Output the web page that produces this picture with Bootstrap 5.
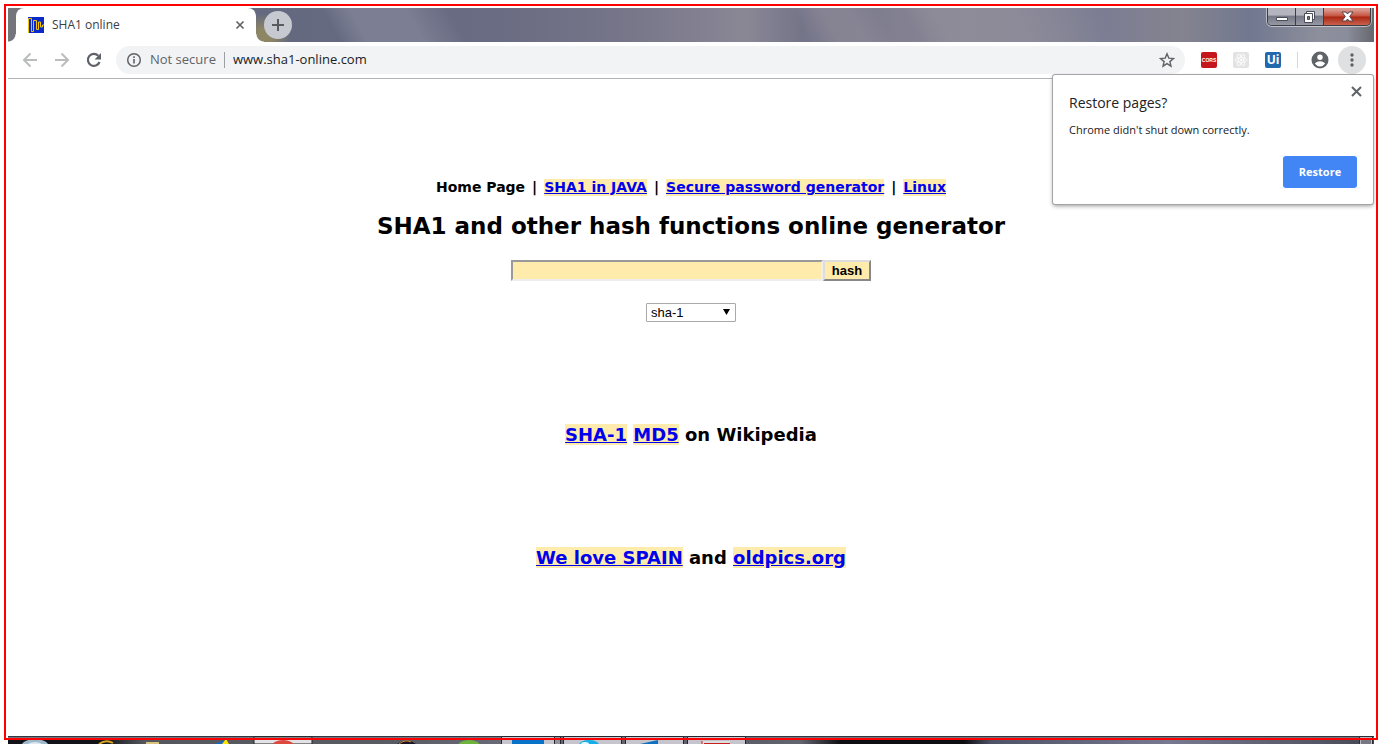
<!DOCTYPE html>
<html lang="en">
<head>
<meta charset="utf-8">
<meta name="viewport" content="width=device-width, initial-scale=1">
<title>SHA1 online</title>
<link href="https://cdn.jsdelivr.net/npm/bootstrap@5.3.0/dist/css/bootstrap.min.css" rel="stylesheet">
<style>
body { background: #fff; color: #000; font-family: "Open Sans", sans-serif; font-size: 12px; }
svg { display: block; flex: none; }
button { padding: 0; }
.screen { padding: 8px 8px 0; }
.outline-frame { position: absolute; inset: 4px; border: 2px solid #f00; pointer-events: none; z-index: 20; }

.title-strip {
  height: 34px; padding-left: 8px;
  background:
    radial-gradient(ellipse 26px 22px at 256px 28px, #8d8664 0 30%, transparent),
    linear-gradient(60deg, transparent 24%, #7c7f93 26% 30%, transparent 33% 58%, #8c8896aa 60% 62%, transparent 64% 66%, #918e9baa 68% 74%, transparent 80%),
    linear-gradient(90deg, #74747a 0, #646980 20%, #6a6c83 36%, #767589 45%, #8a8795 54%, #75758a 58%, #8a8795 70%, #7b7d93 80%, #84838f 86%, #71788f 91%, #8d8f9c 96%, #8a8d9b 98%, #66676d 100%);
}
.browser-tab { width: 240px; height: 34px; padding: 0 11px 0 12px; border-radius: 8px 8px 0 0; background: #fff; position: relative; color: #3c4043; }
.browser-tab::before, .browser-tab::after { content: ""; position: absolute; bottom: 0; width: 8px; height: 8px; }
.browser-tab::before { left: -8px; background: radial-gradient(circle at 0 0, transparent 7px, #fff 8px); }
.browser-tab::after { right: -8px; background: radial-gradient(circle at 100% 0, transparent 7px, #fff 8px); }
.new-tab { width: 28px; height: 28px; border-radius: 50%; background: #c7c9d1; margin: 3px 0 0 8px; }

.win-controls { border: 1px solid #3b3d46; border-top: 0; border-radius: 0 0 5px 5px; overflow: hidden; height: 18px; box-shadow: 0 0 0 1px #ffffff80; margin-right: 3px; }
.win-controls button { height: 17px; border-right: 1px solid #3b3d46 !important; background: linear-gradient(#b4b5bf 0 40%, #777987 50%, #9698a3); }
.win-controls .win-small { width: 28px; }
.win-controls .win-close { width: 46px; border-right: 0 !important; background: linear-gradient(#d9998e 0 10%, #c6513e 48%, #a92611 52%, #c8614d); }

.toolbar { height: 37px; border-bottom: 1px solid #b3b3b5; padding: 0 8px 0 14px; color: #5f6368; }
.nav-icons { gap: 16px; }
.omnibox { height: 28px; border-radius: 14px; background: #f1f3f4; margin: 0 16px 0 14px; padding: 0 10px; font-size: 13px; }
.omnibox .divider { width: 1px; height: 16px; background: #9aa0a6; }
.omnibox input { border: 0; background: none; outline: 0; color: #202124; padding: 0; }
.ext-icons { gap: 16px; }
.ext { width: 16px; height: 16px; border-radius: 2px; line-height: 16px; color: #fff; }
.ext-cors { background: #c4161c; font: bold 5px/16px "Liberation Sans", sans-serif; }
.ext-ui { background: #2268ad; font: bold 12px/16px "Open Sans", sans-serif; }
.bar-sep { width: 1px; height: 16px; background: #d5d7da; margin-left: 16px; }
.profile { margin-left: 12px; }
.menu-btn { width: 28px; height: 28px; border-radius: 50%; background: #dfe0e1; margin-left: 8px; }

.restore-bubble { position: absolute; top: 75px; right: 9px; width: 320px; padding: 18px 16px 16px; background: #fff; border-radius: 2px; box-shadow: 0 0 0 1px #a5a5a7, 0 2px 4px #0006; color: #202124; z-index: 10; }
.restore-bubble h2 { font-size: 14px; line-height: 20px; font-weight: 400; margin: 0 0 8px; }
.restore-bubble p { font-size: 11px; line-height: 18px; margin: 0 0 17px; }
.restore-btn { width: 74px; height: 32px; border-radius: 3px; background: #4285f4; color: #fff; font-size: 11px; font-weight: 700; }
.bubble-x { position: absolute; top: 11px; right: 11px; }

.page { padding-top: 99px; font-family: "DejaVu Sans", sans-serif; font-weight: 700; text-align: center; }
.page a { background: #ffebac; color: #00e; }
.top-links { font-size: 14px; line-height: 17px; margin: 1px 0 14px; gap: 7px; }
.page h1 { font-size: 23px; line-height: 32px; font-weight: 700; margin: 0 0 18px; }
.page h3 { font-size: 18px; line-height: 22px; font-weight: 700; margin: 0 0 101px; }
.hash-input { width: 312px; height: 21px; border: 2px solid; border-color: #999 #eee #eee #999; background: #ffebac; border-radius: 0; padding: 1px; outline: 0; }
.hash-btn { width: 48px; height: 21px; border: 2px solid; border-color: #ddd #888 #888 #ddd; background: #ffebac; font: bold 13px/15px "Liberation Sans", sans-serif; color: #000; }
.algo { width: 90px; height: 19px; margin: 22px 0 102px; border: 1px solid #a9a9a9; border-radius: 1px; padding: 0 4px; color: #000; background: #fff; font: 13px/16px "Liberation Sans", sans-serif; appearance: none; }
.algo-arrow { position: absolute; right: 6px; top: 28px; pointer-events: none; }

.taskbar { height: 8px; background: linear-gradient(#333744 0 1px, #b3b5bd 2px, transparent 3px), linear-gradient(90deg, #111318 0 7%, #55575f 10%, #5a5c64 29%, #686a78 36%, #5a5e69 54%, #62646f 58%, #0d0e12 61% 70%, #4e5467 72%, #777990 85%, #464954); overflow: hidden; }
</style>
</head>
<body>
<div class="screen d-flex flex-column vh-100 position-relative overflow-hidden">
  <div class="outline-frame"></div>

  <header>
    <div class="title-strip d-flex align-items-start">
      <div class="browser-tab d-flex align-items-center">
        <svg width="16" height="16" viewBox="0 0 16 16"><path fill="#0b29c8" d="M0 0h16v16H0z"/><path d="M.5 16V1.500h3v13h2v-11h3v9h2V5h2v5h2V8h2" fill="none" stroke="#f2c40c"/></svg>
        <span class="flex-grow-1 ms-2">SHA1 online</span>
        <button class="btn border-0 rounded-0 p-0" aria-label="Close tab"><svg width="10" height="10" viewBox="0 0 10 10"><path d="M1.500 1.500l7 7m0-7l-7 7" stroke="#5f6368" stroke-width="1.700"/></svg></button>
      </div>
      <button class="new-tab border-0 d-flex align-items-center justify-content-center" aria-label="New tab"><svg width="14" height="14" viewBox="0 0 14 14"><path d="M7 1v12M1 7h12" stroke="#5a5b5e" stroke-width="2"/></svg></button>
      <div class="win-controls d-flex ms-auto">
        <button class="win-small border-0 d-flex align-items-center justify-content-center" aria-label="Minimize"><svg width="14" height="10" viewBox="0 0 14 10"><path d="M1.500 5.500h11v3h-11z" fill="#fff" stroke="#4a4c57"/></svg></button>
        <button class="win-small border-0 d-flex align-items-center justify-content-center" aria-label="Restore window"><svg width="13" height="12" viewBox="0 0 13 12"><path d="M3.500.500h8v8h-8z" fill="#fff" stroke="#4a4c57"/><path d="M1.500 2.500h8v9h-8z" fill="#fff" stroke="#4a4c57"/><path d="M4.500 5.500h2v3h-2z" fill="#777" stroke="#4a4c57"/></svg></button>
        <button class="win-close border-0 d-flex align-items-center justify-content-center" aria-label="Close window"><svg width="13" height="11" viewBox="0 0 13 11"><path d="M1 1h4l1.500 2L8 1h4L8.700 5.500 12 10H8L6.500 8 5 10H1l3.300-4.500z" fill="#fff" stroke="#57434a"/></svg></button>
      </div>
    </div>

    <div class="toolbar d-flex align-items-center">
      <div class="nav-icons d-flex align-items-center">
        <svg width="16" height="16" viewBox="0 0 16 16" fill="none" stroke="#babcbe" stroke-width="2"><path d="M15 8H2.500M8.500 1.500L2 8l6.500 6.500"/></svg>
        <svg width="16" height="16" viewBox="0 0 16 16" fill="none" stroke="#babcbe" stroke-width="2"><path d="M1 8h12.500M7.500 1.500L14 8l-6.500 6.500"/></svg>
        <svg width="16" height="16" viewBox="0 0 16 16"><path d="M13.500 10A6 6 0 1 1 12.300 3.800" fill="none" stroke="#5f6368" stroke-width="2.200"/><path d="M15 1v6.500H8.500z" fill="#5f6368"/></svg>
      </div>
      <div class="omnibox d-flex align-items-center flex-grow-1">
        <svg width="16" height="16" viewBox="0 0 16 16"><circle cx="8" cy="8" r="6.300" fill="none" stroke="#5f6368" stroke-width="1.500"/><path d="M8 7v4.500M8 4.300v1.600" stroke="#5f6368" stroke-width="1.600"/></svg>
        <label for="address" class="ms-2 me-2 text-nowrap">Not secure</label>
        <span class="divider"></span>
        <input id="address" class="flex-grow-1 ms-2" type="text" value="www.sha1-online.com">
        <svg width="16" height="16" viewBox="0 0 16 16"><path d="M8 1.800l1.800 4.300 4.700.4-3.600 3.100 1.100 4.600L8 11.700l-4 2.500 1.100-4.600L1.500 6.500l4.700-.4z" fill="none" stroke="#5f6368" stroke-width="1.400"/></svg>
      </div>
      <div class="ext-icons d-flex align-items-center">
        <span class="ext ext-cors text-center">CORS</span>
        <svg width="16" height="16" viewBox="0 0 16 16"><rect width="16" height="16" rx="2" fill="#e3e3e3"/><g fill="none" stroke="#fafafa"><ellipse cx="8" cy="8" rx="6" ry="2.400"/><ellipse cx="8" cy="8" rx="6" ry="2.400" transform="rotate(60 8 8)"/><ellipse cx="8" cy="8" rx="6" ry="2.400" transform="rotate(120 8 8)"/></g><circle cx="8" cy="8" r="1.200" fill="#fafafa"/></svg>
        <span class="ext ext-ui text-center">Ui</span>
      </div>
      <span class="bar-sep"></span>
      <svg class="profile" width="20" height="20" viewBox="0 0 20 20"><circle cx="10" cy="10" r="8.500" fill="#5f6368"/><circle cx="10" cy="7.200" r="2.700" fill="#fff"/><path d="M4.800 13.600Q7 11.200 10 11.200t5.200 2.400Q13.300 16.400 10 16.400t-5.200-2.800z" fill="#fff"/></svg>
      <button class="menu-btn border-0 d-flex align-items-center justify-content-center" aria-label="Menu"><svg width="4" height="14" viewBox="0 0 4 14" fill="#5f6368"><circle cx="2" cy="2" r="1.700"/><circle cx="2" cy="7" r="1.700"/><circle cx="2" cy="12" r="1.700"/></svg></button>
    </div>
  </header>

  <section class="restore-bubble">
    <button class="bubble-x btn border-0 p-0" aria-label="Dismiss"><svg width="11" height="11" viewBox="0 0 11 11"><path d="M1 1l9 9m0-9l-9 9" stroke="#5f6368" stroke-width="2"/></svg></button>
    <h2>Restore pages?</h2>
    <p>Chrome didn't shut down correctly.</p>
    <div class="d-flex justify-content-end"><button class="restore-btn border-0">Restore</button></div>
  </section>

  <main class="page flex-grow-1">
    <nav class="top-links d-flex justify-content-center"><span>Home Page</span><span>|</span><a href="#">SHA1 in JAVA</a><span>|</span><a href="#">Secure password generator</a><span>|</span><a href="#">Linux</a></nav>
    <h1>SHA1 and other hash functions online generator</h1>
    <form>
      <div class="d-flex justify-content-center">
        <input class="hash-input" type="text" aria-label="Text to hash">
        <button class="hash-btn" type="button">hash</button>
      </div>
      <div class="d-flex justify-content-center">
        <div class="position-relative d-flex">
          <select class="algo" aria-label="Hash function"><option>sha-1</option><option>md5</option></select>
          <svg class="algo-arrow" width="7" height="6" viewBox="0 0 7 6"><path d="M0 0h7L3.500 6z"/></svg>
        </div>
      </div>
    </form>
    <h3><a href="#">SHA-1</a> <a href="#">MD5</a> on Wikipedia</h3>
    <h3><a href="#">We love SPAIN</a> and <a href="#">oldpics.org</a></h3>
  </main>

  <footer class="taskbar d-flex justify-content-between">
    <svg width="740" height="8" viewBox="0 0 740 8">
      <ellipse cx="27" cy="11" rx="14" ry="8" fill="#9fb9cc"/><ellipse cx="27" cy="13" rx="10" ry="7" fill="#dce8ef"/>
      <path d="M91 8q7-5 14-1" fill="none" stroke="#d9a520" stroke-width="2"/>
      <path d="M138 6h13v2h-13z" fill="#d8c47c"/><path d="M207 8l9-4v4z" fill="#1766c4"/><path d="M214 8l4-5 3 5z" fill="#ffe600"/>
      <path d="M246 1h58v7h-58z" fill="#e3e2e6" stroke="#222"/><ellipse cx="275" cy="10" rx="11" ry="6" fill="#dc4a3d"/>
      <path d="M389 8q10-7 19 0z" fill="#171525"/><path d="M391 8q6-5 12-2" fill="none" stroke="#d98736"/>
      <ellipse cx="461" cy="10" rx="11" ry="6" fill="#6eb33b"/>
      <g fill="#c6c4cd" stroke="#242631"><path d="M493.500.500h53v9h-53z"/><path d="M546.500.500h6v9h-6z" fill="#94939d"/><path d="M555.500.500h58v9h-58zM617.500.500h58v9h-58zM679.500.500h58v9h-58z"/></g>
      <path d="M504 3h32v5h-32z" fill="#0872c9"/><ellipse cx="581" cy="9" rx="10" ry="5" fill="#15aeea"/><ellipse cx="577" cy="8" rx="4" ry="2" fill="#e9faff"/><path d="M632 8l18-4v4z" fill="#0f70c0"/><path d="M694 5h28v3h-28z" fill="#ddd" /><path d="M694 8V5M696 7.500h26" stroke="#c8201d"/>
    </svg>
    <svg width="16" height="8" viewBox="0 0 16 8"><path d="M1.500.500h13v9h-13z" fill="#777882" stroke="#2b2d35"/><path d="M2.500 8V1.500h11V8" fill="none" stroke="#b9bac2"/></svg>
  </footer>
</div>
<script src="https://cdn.jsdelivr.net/npm/bootstrap@5.3.0/dist/js/bootstrap.bundle.min.js"></script>
</body>
</html>
